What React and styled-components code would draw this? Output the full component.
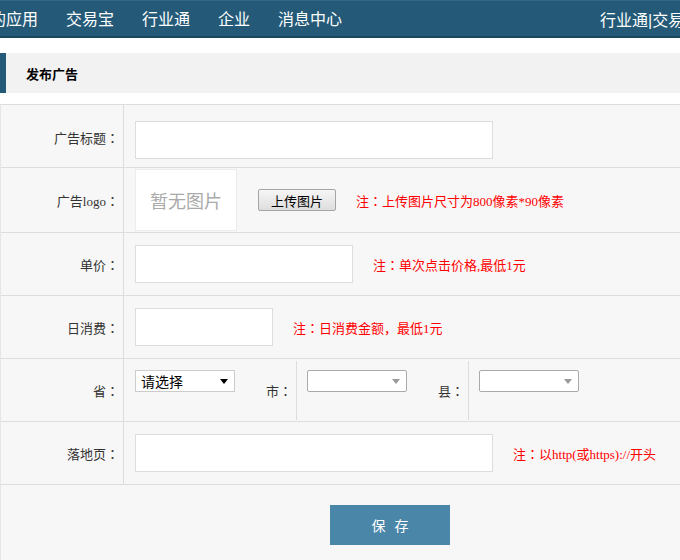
import React from 'react';
import styled, { createGlobalStyle } from 'styled-components';

const GlobalStyle = createGlobalStyle`
  html, body {
    margin: 0;
    padding: 0;
    background: #fff;
    font-family: 'Liberation Serif', 'Noto Sans CJK SC', serif;
    font-size: 13px;
    color: #333;
  }
  #root {
    width: 680px;
    height: 560px;
    overflow: hidden;
  }
`;

const NavBar = styled.div`
  height: 35px;
  background: #245a78;
  border-top: 1px solid #2e6788;
  border-bottom: 2px solid #1b475f;
  display: flex;
  align-items: center;
  overflow: hidden;
  font-family: 'Noto Sans CJK SC', sans-serif;
  font-size: 16px;
  color: #fff;
`;

const NavList = styled.div`
  flex: 1;
  display: flex;
  gap: 28px;
  margin-left: -10px;
  white-space: nowrap;
`;

const NavItem = styled.span`
  line-height: 35px;
`;

const NavRight = styled.div`
  width: 80px;
  flex-shrink: 0;
  white-space: nowrap;
  overflow: hidden;
`;

const Sep = styled.span`
  font-family: 'Liberation Sans', sans-serif;
  font-weight: 300;
`;

const SectionHead = styled.div`
  margin-top: 15px;
  height: 40px;
  background: #f2f2f2;
  border-left: 6px solid #245a78;
  padding-left: 20px;
  display: flex;
  align-items: center;
  font-family: 'Noto Sans CJK SC', sans-serif;
  font-weight: bold;
  font-size: 13px;
  color: #000;
`;

const Form = styled.div`
  margin-top: 11px;
  background: #f7f7f7;
  border-top: 1px solid #ddd;
  border-left: 1px solid #e6e6e6;
  height: 500px;
`;

const Row = styled.div`
  display: flex;
  height: ${p => p.$h || 62}px;
  border-bottom: 1px solid #ddd;
`;

const Label = styled.div`
  width: 118px;
  flex-shrink: 0;
  border-right: 1px solid #ddd;
  display: flex;
  align-items: center;
  justify-content: flex-end;
  padding-right: 4px;
  padding-top: ${p => p.$pt || 0}px;
  font-size: 13px;
  color: #333;
`;

const Colon = styled.span`
  font-family: 'Noto Sans CJK JP', sans-serif;
`;

const Cell = styled.div`
  flex: 1;
  display: flex;
  align-items: center;
  padding-left: 11px;
  padding-top: ${p => p.$pt || 0}px;
`;

const RegionRow = styled.div`
  flex: 1;
  display: flex;
  align-items: stretch;
`;

const TextInput = styled.input`
  box-sizing: border-box;
  width: ${p => p.$w}px;
  height: 38px;
  border: 1px solid #ddd;
  background: #fff;
  outline: none;
  padding: 0 8px;
`;

const Note = styled.span`
  margin-left: 20px;
  color: #f00;
  font-size: 13px;
`;

const ImageBox = styled.div`
  box-sizing: border-box;
  width: 102px;
  height: 62px;
  background: #fff;
  border: 1px solid #ececec;
  display: flex;
  align-items: center;
  justify-content: center;
  font-family: 'Noto Sans CJK SC', sans-serif;
  font-size: 18px;
  color: #aaa;
`;

const UploadButton = styled.button`
  box-sizing: border-box;
  margin-left: 21px;
  width: 78px;
  height: 22px;
  padding: 0;
  border: 1px solid #a5a5a5;
  border-radius: 2px;
  background: linear-gradient(#f6f6f6, #dedede);
  font-family: 'Noto Sans CJK SC', sans-serif;
  font-size: 13px;
  color: #000;
`;

const RegionCell = styled.div`
  display: flex;
  width: ${p => p.$w}px;
  border-right: ${p => (p.$last ? 'none' : '1px solid #ddd')};
  margin: 2px 0 1px;
`;

const RegionInner = styled.div`
  flex: 1;
  display: flex;
  align-items: flex-start;
  padding-left: ${p => p.$pl}px;
  padding-top: 9px;
`;

const SubLabel = styled.div`
  display: flex;
  align-items: center;
  padding-right: 4px;
  font-size: 13px;
  color: #333;
`;

const SelectBox = styled.div`
  box-sizing: border-box;
  width: ${p => p.$w}px;
  height: 22px;
  background: #fff;
  border: 1px solid ${p => (p.$plain ? '#ccc' : '#aaa')};
  border-radius: ${p => (p.$plain ? 0 : 2)}px;
  display: flex;
  align-items: center;
  justify-content: space-between;
  padding: 0 6px 0 5px;
  font-family: 'Noto Sans CJK SC', sans-serif;
  font-size: 14px;
  color: #000;
`;

const ButtonRow = styled.div`
  padding: 20px 0 0 329px;
`;

const SaveButton = styled.button`
  width: 120px;
  height: 40px;
  border: none;
  background: #4a86a8;
  color: #fff;
  font-family: 'Noto Sans CJK SC', sans-serif;
  font-size: 14px;
  letter-spacing: 3px;
  padding: 0 0 0 3px;
`;

const Arrow = ({ color }) => (
  <svg width="8" height="5" viewBox="0 0 8 5">
    <path d="M0 0 L8 0 L4 5 Z" fill={color} />
  </svg>
);

const navItems = ['的应用', '交易宝', '行业通', '企业', '消息中心'];

const C = () => <Colon>：</Colon>;

export default function App() {
  return (
    <>
      <GlobalStyle />
      <NavBar>
        <NavList>
          {navItems.map(n => (
            <NavItem key={n}>{n}</NavItem>
          ))}
        </NavList>
        <NavRight>
          行业通<Sep>|</Sep>交易宝
        </NavRight>
      </NavBar>
      <SectionHead>发布广告</SectionHead>
      <Form>
        <Row>
          <Label $pt={2}>广告标题<C /></Label>
          <Cell $pt={8}>
            <TextInput $w={358} />
          </Cell>
        </Row>
        <Row $h={64}>
          <Label>广告logo<C /></Label>
          <Cell>
            <ImageBox>暂无图片</ImageBox>
            <UploadButton>上传图片</UploadButton>
            <Note>注<C />上传图片尺寸为800像素*90像素</Note>
          </Cell>
        </Row>
        <Row>
          <Label>单价<C /></Label>
          <Cell>
            <TextInput $w={218} />
            <Note>注<C />单次点击价格,最低1元</Note>
          </Cell>
        </Row>
        <Row>
          <Label>日消费<C /></Label>
          <Cell>
            <TextInput $w={138} />
            <Note>注<C />日消费金额，最低1元</Note>
          </Cell>
        </Row>
        <Row>
          <Label>省<C /></Label>
          <RegionRow>
            <RegionCell $w={172}>
              <RegionInner $pl={11}>
                <SelectBox $w={100} $plain>
                  请选择
                  <Arrow color="#000" />
                </SelectBox>
              </RegionInner>
              <SubLabel>市<C /></SubLabel>
            </RegionCell>
            <RegionCell $w={171}>
              <RegionInner $pl={10}>
                <SelectBox $w={100}>
                  <span />
                  <Arrow color="#999" />
                </SelectBox>
              </RegionInner>
              <SubLabel>县<C /></SubLabel>
            </RegionCell>
            <RegionCell $w={200} $last>
              <RegionInner $pl={10}>
                <SelectBox $w={100}>
                  <span />
                  <Arrow color="#999" />
                </SelectBox>
              </RegionInner>
            </RegionCell>
          </RegionRow>
        </Row>
        <Row>
          <Label>落地页<C /></Label>
          <Cell>
            <TextInput $w={358} />
            <Note>注<C />以http(或https)://开头</Note>
          </Cell>
        </Row>
        <ButtonRow>
          <SaveButton>保 存</SaveButton>
        </ButtonRow>
      </Form>
    </>
  );
}
